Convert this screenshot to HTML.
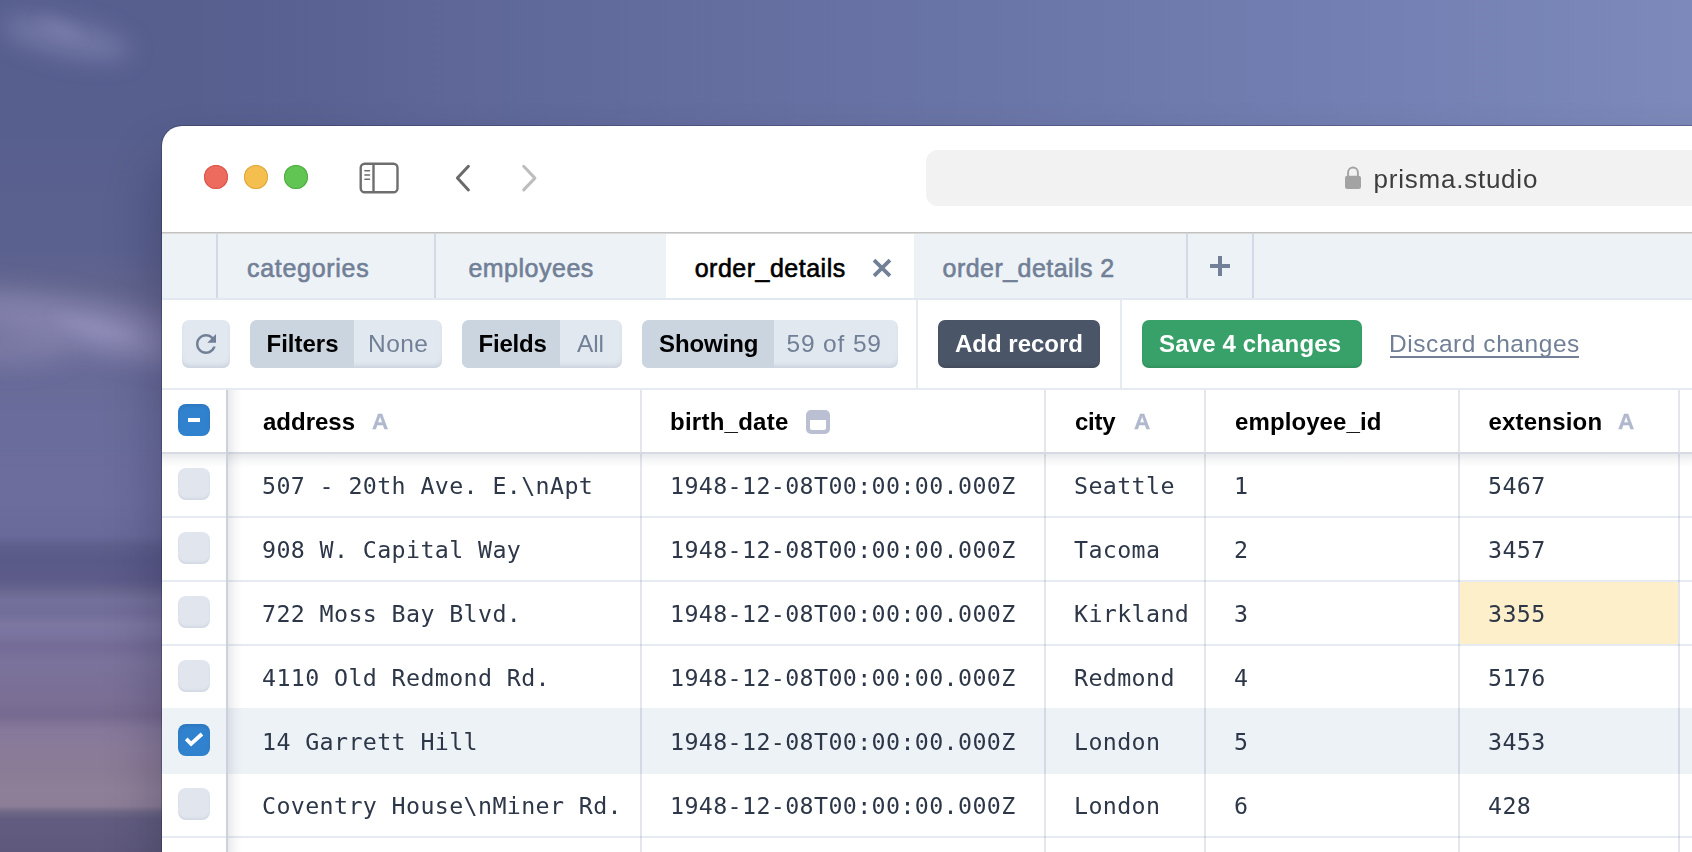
<!DOCTYPE html>
<html lang="en">
<head>
<meta charset="utf-8">
<title>Prisma Studio</title>
<style>
*{box-sizing:border-box;margin:0;padding:0}
html,body{width:1692px;height:852px;overflow:hidden}
body{position:relative;font-family:"Liberation Sans",sans-serif;background:#575f8f;}
.abs{position:absolute}
/* ---------- background sky ---------- */
#sky-top{position:absolute;left:0;top:0;width:1692px;height:140px;
  background:linear-gradient(90deg,#575f8f 0%,#5a6394 18%,#626c9d 38%,#6a75a7 58%,#737fb2 80%,#7c89ba 100%);}
#sky-left{position:absolute;left:0;top:0;width:200px;height:852px;
  background:linear-gradient(180deg,#575f8f 0px,#58608f 126px,#5b618f 250px,#62658e 288px,#6e6d99 318px,#6e6e9a 350px,#686a98 378px,#6a6c9b 420px,#6c6d9d 500px,#696a9a 535px,#5f5f8d 546px,#5a5a89 560px,#5c5b89 580px,#68658f 590px,#73709b 600px,#726e9a 613px,#7b77a1 625px,#7a75a0 634px,#746c97 646px,#7b739b 663px,#7a7098 684px,#7b6f95 700px,#776a90 715px,#85789a 730px,#8a7b99 750px,#8a7b96 770px,#8f8099 790px,#8c7e97 806px,#6e6886 812px,#625d80 819px,#5e597c 852px);}
#sky-blend{position:absolute;left:0;top:0;width:420px;height:140px;
  background:linear-gradient(90deg,rgba(87,95,143,1) 0px,rgba(87,95,143,1) 150px,rgba(87,95,143,0) 420px);}
#clouds{position:absolute;left:0;top:0}
/* ---------- window ---------- */
#win{position:absolute;left:162px;top:126px;width:1600px;height:800px;background:#fff;border-top-left-radius:20px;
  box-shadow:0 0 0 1px rgba(20,20,50,.28),0 36px 56px 0 rgba(10,10,40,.30);overflow:hidden}
#win .in{position:absolute;left:-162px;top:-126px;width:1692px;height:852px}
/* titlebar */
.tl{position:absolute;top:165.4px;width:24px;height:24px;border-radius:50%}
#urlbar{position:absolute;left:926px;top:150px;width:900px;height:56px;border-radius:12px;background:#f2f2f2}
#url{position:absolute;left:1373.5px;top:163.9px;font-size:26px;line-height:30px;color:#3d3d3d;letter-spacing:.77px;white-space:nowrap}
#tline{position:absolute;left:162px;top:232px;width:1600px;height:2px;background:linear-gradient(180deg,#c2c2c2 0,#c2c2c2 50%,#d9d9d9 50%,#d9d9d9 100%)}
/* tabs */
#tabbar{position:absolute;left:162px;top:234px;width:1600px;height:64px;background:#edf2f7}
#tabborder{position:absolute;left:162px;top:298px;width:1600px;height:2px;background:#e2e8f0}
.tsep{position:absolute;top:234px;width:2px;height:64px;background:#d3d9e6}
.tab{position:absolute;top:252.5px;font-size:25px;line-height:30px;color:#718096;white-space:nowrap;letter-spacing:.5px;-webkit-text-stroke:.6px currentColor}
#tabact{position:absolute;left:666px;top:234px;width:248px;height:64px;background:#fff}
/* toolbar */
.btn{position:absolute;top:320px;height:48px;border-radius:7px;white-space:nowrap;overflow:hidden;box-shadow:inset 0 -4px 5px -2px rgba(60,80,110,.16)}
.seg{position:absolute;top:0;height:48px}
.lbl{position:absolute;top:329px;font-size:24px;line-height:30px;white-space:nowrap}
.b{font-weight:700;color:#000}
.g{color:#718096;font-size:24.5px}
.vsep{position:absolute;top:300px;width:2px;height:88px;background:#e6ebf2}
#tbborder{position:absolute;left:162px;top:388px;width:1600px;height:2px;background:#e6ebf2}
/* table */
.hline{position:absolute;left:162px;width:1600px;height:2px;background:#e6ebf2}
.vline{position:absolute;top:390px;width:2px;height:500px;background:rgba(45,60,110,.13)}
.th{position:absolute;top:407px;font-size:24px;line-height:30px;font-weight:700;color:#000;white-space:nowrap}
.ty{position:absolute;top:408px;font-size:22.5px;line-height:28px;font-weight:700;color:#b0b8cd;-webkit-text-stroke:.3px #b0b8cd}
.td{position:absolute;font-family:"DejaVu Sans Mono","Liberation Mono",monospace;font-size:23.3px;letter-spacing:.373px;line-height:30px;color:#2d3748;white-space:pre}
.cb{position:absolute;left:178px;width:32px;height:32px;border-radius:8px;background:#e0e5ee;box-shadow:inset 0 -2px 3px -1px rgba(60,80,110,.12)}
.cb.on{background:#3182ce;box-shadow:inset 0 2px 4px -1px rgba(0,0,40,.13)}
</style>
</head>
<body>
<div id="sky-top"></div>
<div id="sky-left"></div>
<div id="sky-blend"></div>
<svg id="clouds" width="420" height="852" viewBox="0 0 420 852">
  <defs>
    <filter id="bl1" x="-60%" y="-200%" width="220%" height="500%"><feGaussianBlur stdDeviation="12"/></filter>
    <filter id="bl2" x="-60%" y="-200%" width="220%" height="500%"><feGaussianBlur stdDeviation="7"/></filter>
  </defs>
  <g filter="url(#bl1)" fill="#a9a6cf">
    <ellipse cx="66" cy="38" rx="66" ry="17" opacity=".34" transform="rotate(12 66 38)"/>
    <ellipse cx="60" cy="318" rx="110" ry="22" opacity=".36" transform="rotate(10 60 318)"/>
    <ellipse cx="125" cy="345" rx="60" ry="12" opacity=".30" transform="rotate(14 125 345)"/>
    <ellipse cx="15" cy="350" rx="55" ry="16" opacity=".22"/>
  </g>
  <g filter="url(#bl2)" fill="#b7b1d6">
    <ellipse cx="60" cy="28" rx="24" ry="7" opacity=".14" transform="rotate(25 60 28)"/>
    <ellipse cx="95" cy="328" rx="44" ry="6" opacity=".20" transform="rotate(14 95 328)"/>
  </g>
</svg>

<div id="win"><div class="in">
  <!-- title bar -->
  <div class="tl" style="left:204px;background:#ed6a5e;box-shadow:inset 0 0 0 1px #d9564a"></div>
  <div class="tl" style="left:244px;background:#f5bf4f;box-shadow:inset 0 0 0 1px #dea73c"></div>
  <div class="tl" style="left:284px;background:#61c554;box-shadow:inset 0 0 0 1px #4dab42"></div>
  <svg class="abs" style="left:356px;top:158px" width="46" height="40" viewBox="356 158 46 40">
    <rect x="360.7" y="163.8" width="36.8" height="28.5" rx="4" fill="none" stroke="#6e6e6e" stroke-width="2.4"/>
    <line x1="373.5" y1="164" x2="373.5" y2="192" stroke="#6e6e6e" stroke-width="2.4"/>
    <path d="M364.9 170.8h4.6M364.9 175.05h4.6M364.9 179.3h4.6" stroke="#6e6e6e" stroke-width="1.5" stroke-linecap="round"/>
  </svg>
  <svg class="abs" style="left:450px;top:158px" width="30" height="40" viewBox="450 158 30 40">
    <path d="M468.4 166.3 L457.4 178.1 L468.4 189.9" fill="none" stroke="#6a6a6a" stroke-width="3" stroke-linecap="round" stroke-linejoin="round"/>
  </svg>
  <svg class="abs" style="left:514px;top:158px" width="30" height="40" viewBox="514 158 30 40">
    <path d="M523.7 166.3 L534.9 178.1 L523.7 189.9" fill="none" stroke="#bdbdbd" stroke-width="3" stroke-linecap="round" stroke-linejoin="round"/>
  </svg>
  <div id="urlbar"></div>
  <svg class="abs" style="left:1343px;top:164px" width="20" height="28" viewBox="0 0 20 28">
    <path d="M5.1 13 V8.4 a4.9 4.9 0 0 1 9.8 0 V13" fill="none" stroke="#a3a3a3" stroke-width="1.9"/>
    <rect x="2" y="11.7" width="16" height="13.3" rx="2.2" fill="#a3a3a3"/>
  </svg>
  <div id="url">prisma.studio</div>
  <div id="tline"></div>

  <!-- tabs -->
  <div id="tabbar"></div>
  <div id="tabact"></div>
  <div class="tsep" style="left:216px"></div>
  <div class="tsep" style="left:434px"></div>
  <div class="tsep" style="left:1186px"></div>
  <div class="tsep" style="left:1252px"></div>
  <div id="tabborder"></div>
  <div class="tab" style="left:247px;letter-spacing:.7px">categories</div>
  <div class="tab" style="left:468.4px">employees</div>
  <div class="tab" style="left:694.7px;color:#000">order_details</div>
  <svg class="abs" style="left:870px;top:256px" width="24" height="24" viewBox="870 256 24 24">
    <path d="M874.05 260.05 L889.95 275.95 M889.95 260.05 L874.05 275.95" stroke="#718096" stroke-width="3.75" fill="none"/>
  </svg>
  <div class="tab" style="left:942.6px;letter-spacing:.45px">order_details 2</div>
  <svg class="abs" style="left:1208px;top:254px" width="24" height="24" viewBox="1208 254 24 24">
    <path d="M1220 256 V276 M1210 266 H1230" stroke="#718096" stroke-width="4" fill="none"/>
  </svg>

  <!-- toolbar -->
  <div class="btn" style="left:182px;width:48px;background:#e2e8f0"></div>
  <svg class="abs" style="left:191px;top:329px" width="30" height="30" viewBox="0 0 24 24">
    <path fill="#718096" d="M17.65 6.35C16.2 4.9 14.21 4 12 4c-4.42 0-7.99 3.58-7.99 8s3.57 8 7.99 8c3.73 0 6.84-2.55 7.73-6h-2.08c-.82 2.33-3.04 4-5.65 4-3.31 0-6-2.690-6-6s2.690-6 6-6c1.660 0 3.140.690 4.220 1.780L13 11h7V4l-2.350 2.350z"/>
  </svg>
  <div class="btn" style="left:250px;width:192px;background:#e2e8f0"><div class="seg" style="left:0;width:104px;background:#cbd5e0"></div></div>
  <div class="lbl b" style="left:266.5px">Filters</div>
  <div class="lbl g" style="left:368px;letter-spacing:.45px">None</div>
  <div class="btn" style="left:462px;width:160px;background:#e2e8f0"><div class="seg" style="left:0;width:98px;background:#cbd5e0"></div></div>
  <div class="lbl b" style="left:478.5px;letter-spacing:-.2px">Fields</div>
  <div class="lbl g" style="left:577px;letter-spacing:-.2px">All</div>
  <div class="btn" style="left:642px;width:256px;background:#e2e8f0"><div class="seg" style="left:0;width:132px;background:#cbd5e0"></div></div>
  <div class="lbl b" style="left:659px;letter-spacing:-.1px">Showing</div>
  <div class="lbl g" style="left:786.5px;letter-spacing:.85px">59 of 59</div>
  <div class="vsep" style="left:916px"></div>
  <div class="btn" style="left:938px;width:162px;background:#4a5568;box-shadow:inset 0 -3px 3px -1px rgba(0,0,0,.12)"></div>
  <div class="lbl b" style="left:955px;color:#fff">Add record</div>
  <div class="vsep" style="left:1120px"></div>
  <div class="btn" style="left:1142px;width:220px;background:#38a169;box-shadow:inset 0 -3px 3px -1px rgba(0,0,0,.1)"></div>
  <div class="lbl b" style="left:1159px;color:#fff;letter-spacing:.15px">Save 4 changes</div>
  <div class="lbl g" style="left:1389px;letter-spacing:.56px">Discard changes</div>
  <div class="abs" style="left:1390px;top:356px;width:189px;height:2px;background:#718096"></div>
  <div id="tbborder"></div>

  <!-- table -->
  <div class="abs" style="left:162px;top:708px;width:1600px;height:66px;background:#edf2f7"></div>
  <div class="abs" style="left:1460px;top:582px;width:218px;height:62px;background:#feefcb"></div>
  <div class="hline" style="top:516px"></div>
  <div class="hline" style="top:580px"></div>
  <div class="hline" style="top:644px"></div>
  <div class="hline" style="top:836px"></div>
  <div class="hline" style="top:900px"></div>
  <div class="vline" style="left:640px"></div>
  <div class="vline" style="left:1044px"></div>
  <div class="vline" style="left:1204px"></div>
  <div class="vline" style="left:1458px"></div>
  <div class="vline" style="left:1678px"></div>
  <div class="abs" style="left:162px;top:452px;width:1600px;height:2px;background:#d6dbe3"></div>
  <div class="abs" style="left:162px;top:454px;width:1600px;height:14px;background:linear-gradient(180deg,rgba(40,50,70,.10),rgba(40,50,70,.03) 55%,rgba(40,50,70,0))"></div>
  <div class="abs" style="left:226px;top:390px;width:2px;height:500px;background:#cdd1dc"></div>
  <div class="abs" style="left:228px;top:390px;width:14px;height:500px;background:linear-gradient(90deg,rgba(40,50,70,.10),rgba(40,50,70,.03) 55%,rgba(40,50,70,0))"></div>
  <div class="cb on" style="top:404px"><div class="abs" style="left:10px;top:14px;width:12px;height:4px;background:#fff"></div></div>
  <div class="th" style="left:263px">address</div><div class="ty" style="left:372px">A</div>
  <div class="th" style="left:670px;letter-spacing:.25px">birth_date</div>
  <svg class="abs" style="left:806px;top:410px" width="24" height="24" viewBox="0 0 24 24"><path fill-rule="evenodd" fill="#bac0d2" d="M5 0h14a5 5 0 0 1 5 5v14a5 5 0 0 1-5 5H5a5 5 0 0 1-5-5V5a5 5 0 0 1 5-5zM4 10h16v8a2 2 0 0 1-2 2H6a2 2 0 0 1-2-2z"/></svg>
  <div class="th" style="left:1075px;letter-spacing:-.25px">city</div><div class="ty" style="left:1134px">A</div>
  <div class="th" style="left:1235px;letter-spacing:.1px">employee_id</div>
  <div class="th" style="left:1488.5px;letter-spacing:.2px">extension</div><div class="ty" style="left:1618px">A</div>
  <div class="cb" style="top:468px"></div>
  <div class="td" style="left:262px;top:471px">507 - 20th Ave. E.\nApt</div>
  <div class="td" style="left:670px;top:471px">1948-12-08T00:00:00.000Z</div>
  <div class="td" style="left:1074px;top:471px">Seattle</div>
  <div class="td" style="left:1234px;top:471px">1</div>
  <div class="td" style="left:1488px;top:471px">5467</div>
  <div class="cb" style="top:532px"></div>
  <div class="td" style="left:262px;top:535px">908 W. Capital Way</div>
  <div class="td" style="left:670px;top:535px">1948-12-08T00:00:00.000Z</div>
  <div class="td" style="left:1074px;top:535px">Tacoma</div>
  <div class="td" style="left:1234px;top:535px">2</div>
  <div class="td" style="left:1488px;top:535px">3457</div>
  <div class="cb" style="top:596px"></div>
  <div class="td" style="left:262px;top:599px">722 Moss Bay Blvd.</div>
  <div class="td" style="left:670px;top:599px">1948-12-08T00:00:00.000Z</div>
  <div class="td" style="left:1074px;top:599px">Kirkland</div>
  <div class="td" style="left:1234px;top:599px">3</div>
  <div class="td" style="left:1488px;top:599px">3355</div>
  <div class="cb" style="top:660px"></div>
  <div class="td" style="left:262px;top:663px">4110 Old Redmond Rd.</div>
  <div class="td" style="left:670px;top:663px">1948-12-08T00:00:00.000Z</div>
  <div class="td" style="left:1074px;top:663px">Redmond</div>
  <div class="td" style="left:1234px;top:663px">4</div>
  <div class="td" style="left:1488px;top:663px">5176</div>
  <div class="cb on" style="top:724px"><svg class="abs" style="left:0;top:0" width="32" height="32" viewBox="0 0 32 32"><path d="M8.24 14.86 L13.1 19.95 L23.95 10" fill="none" stroke="#fff" stroke-width="3.8"/></svg></div>
  <div class="td" style="left:262px;top:727px">14 Garrett Hill</div>
  <div class="td" style="left:670px;top:727px">1948-12-08T00:00:00.000Z</div>
  <div class="td" style="left:1074px;top:727px">London</div>
  <div class="td" style="left:1234px;top:727px">5</div>
  <div class="td" style="left:1488px;top:727px">3453</div>
  <div class="cb" style="top:788px"></div>
  <div class="td" style="left:262px;top:791px">Coventry House\nMiner Rd.</div>
  <div class="td" style="left:670px;top:791px">1948-12-08T00:00:00.000Z</div>
  <div class="td" style="left:1074px;top:791px">London</div>
  <div class="td" style="left:1234px;top:791px">6</div>
  <div class="td" style="left:1488px;top:791px">428</div>
  <div class="cb" style="top:852px"></div>
</div></div>
</body>
</html>
